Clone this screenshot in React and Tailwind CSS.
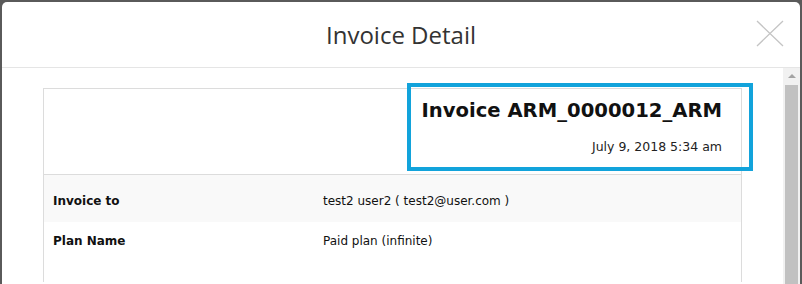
const rows = [
  { label: 'Invoice to', value: 'test2 user2 ( test2@user.com )', shaded: true },
  { label: 'Plan Name', value: 'Paid plan (infinite)', shaded: false },
];

const App = () => {
  return (
    <div className="h-[284px] w-[802px] overflow-hidden bg-[#5a5a5a] pt-[2px] pl-[2px] pr-[2px]">
      <div className="flex h-full flex-col rounded-t-[5px] bg-white">
        {/* Modal header */}
        <div className="relative flex h-[66px] shrink-0 items-center justify-center border-b border-[#e5e5e5]">
          <h2 className="font-['Open_Sans',sans-serif] text-[24px] font-normal leading-[30px] text-[#333]">
            Invoice Detail
          </h2>
          <button className="absolute top-[18px] right-[16px] text-[#c4c4c4]">
            <svg width="28" height="28" viewBox="0 0 28 28" fill="none" stroke="currentColor" strokeWidth="1.3">
              <path d="M1 1 L27 26 M27 1 L1 26" />
            </svg>
          </button>
        </div>

        {/* Modal body */}
        <div className="flex min-h-0 flex-1">
          <div className="flex-1 px-[41px] pt-[20px]">
            <div className="relative border-x border-t border-[#dcdcdc] font-['DejaVu_Sans',sans-serif] text-[#111]">
              {/* highlight annotation */}
              <div className="pointer-events-none absolute top-[-6px] left-[363px] h-[88px] w-[346px] border-[4px] border-[#12a3db]" />

              <div className="flex h-[86px] flex-col items-end border-b border-[#dcdcdc] pt-[8px] pr-[19px]">
                <div className="text-[19.6px] font-bold leading-[28px]">
                  Invoice ARM_0000012_ARM
                </div>
                <div className="mt-[14px] text-[12.5px] leading-[16px] text-[#222]">
                  July 9, 2018 5:34 am
                </div>
              </div>

              {rows.map((row) => (
                <div
                  key={row.label}
                  className={`flex text-[12px] leading-[18px] ${
                    row.shaded ? 'h-[47px] bg-[#f9f9f9] pt-[17px]' : 'h-[60px] pt-[10px]'
                  }`}
                >
                  <div className="w-[271px] shrink-0 pl-[9px] font-bold">{row.label}</div>
                  <div className="pl-[8px]">{row.value}</div>
                </div>
              ))}
            </div>
          </div>

          {/* scrollbar */}
          <div className="flex w-[17px] shrink-0 flex-col items-center bg-[#f1f1f1]">
            <div className="mt-[6px] h-0 w-0 border-x-[4px] border-b-[4px] border-x-transparent border-b-[#a3a3a3]" />
            <div className="mt-[7px] w-[13px] flex-1 bg-[#c1c1c1]" />
          </div>
        </div>
      </div>
    </div>
  );
};

export default App;
